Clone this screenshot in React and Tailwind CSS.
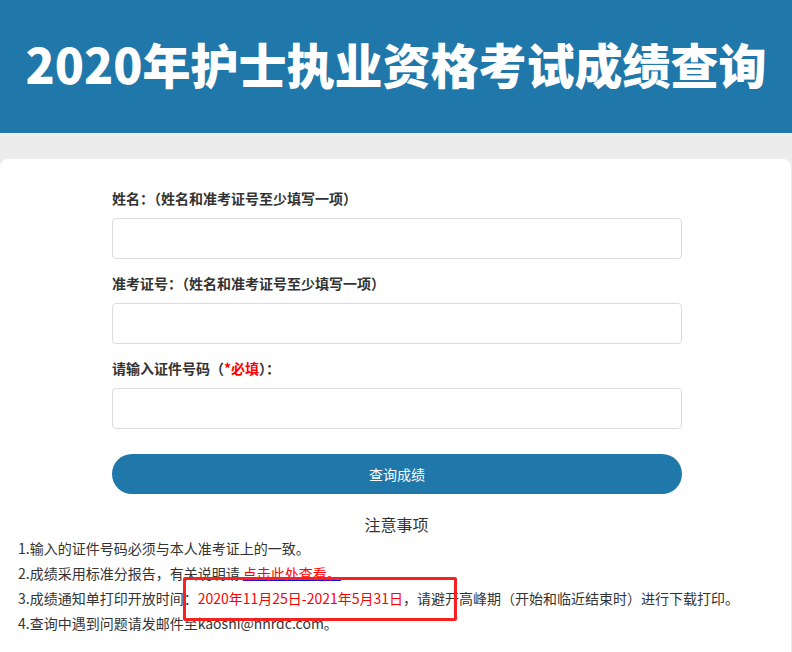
import React from "react";

const fields = [
  { label: "姓名：（姓名和准考证号至少填写一项）" },
  { label: "准考证号：（姓名和准考证号至少填写一项）" },
  { label: "required" },
];

export default function App() {
  return (
    <div className="min-h-[652px] bg-[#ececec] font-['Noto_Sans_CJK_SC','Microsoft_YaHei',sans-serif] text-[#333]">
      {/* Header */}
      <div className="h-[133px] bg-[#1f77aa] flex items-center justify-center">
        <h1 className="text-white text-[48px] font-black leading-none whitespace-nowrap pb-[8px]">
          2020年护士执业资格考试成绩查询
        </h1>
      </div>

      <div className="pt-[26px]">
        <div className="bg-white rounded-t-lg mr-[1px] min-h-[493px]">
          {/* Form */}
          <div className="pl-[112px] pt-[29px] w-[682px]">
            {fields.map((f, i) => (
              <div key={i} className="mb-[14px]">
                <p className="text-[14px] font-bold leading-[20px] mb-[10px] text-[#333]">
                  {f.label === "required" ? (
                    <>
                      请输入证件号码（<span className="text-[#ff0000]">*必填</span>）：
                    </>
                  ) : (
                    f.label
                  )}
                </p>
                <input
                  type="text"
                  className="block w-[570px] h-[41px] border border-[#dcdcdc] rounded-[4px] outline-none px-3 text-[14px]"
                />
              </div>
            ))}
            <button className="mt-[11px] w-[570px] h-[40px] rounded-full bg-[#1f77aa] text-white text-[14px] leading-[38px]">
              查询成绩
            </button>
          </div>

          {/* Notes */}
          <div className="mt-[18px]">
            <p className="text-center text-[16px] leading-[24px] pl-[2px]">注意事项</p>
            <div className="px-[18px] text-[14px] leading-[25px] text-[#333]">
              <p>1.输入的证件号码必须与本人准考证上的一致。</p>
              <p>
                2.成绩采用标准分报告，有关说明请{" "}
                <a className="text-[#ff0000] underline decoration-[#0000ee]">点击此处查看。</a>
              </p>
              <p className="relative">
                3.成绩通知单打印开放时间：
                <span className="text-[#ff0000]">2020年11月25日-2021年5月31日</span>
                ，请避开高峰期（开始和临近结束时）进行下载打印。
                <span className="absolute left-[165px] top-[-9px] w-[274px] h-[44px] border-[3px] border-[#f5221f] rounded-[2px]"></span>
              </p>
              <p>4.查询中遇到问题请发邮件至kaoshi@hnrdc.com。</p>
            </div>
          </div>
        </div>
      </div>
    </div>
  );
}
